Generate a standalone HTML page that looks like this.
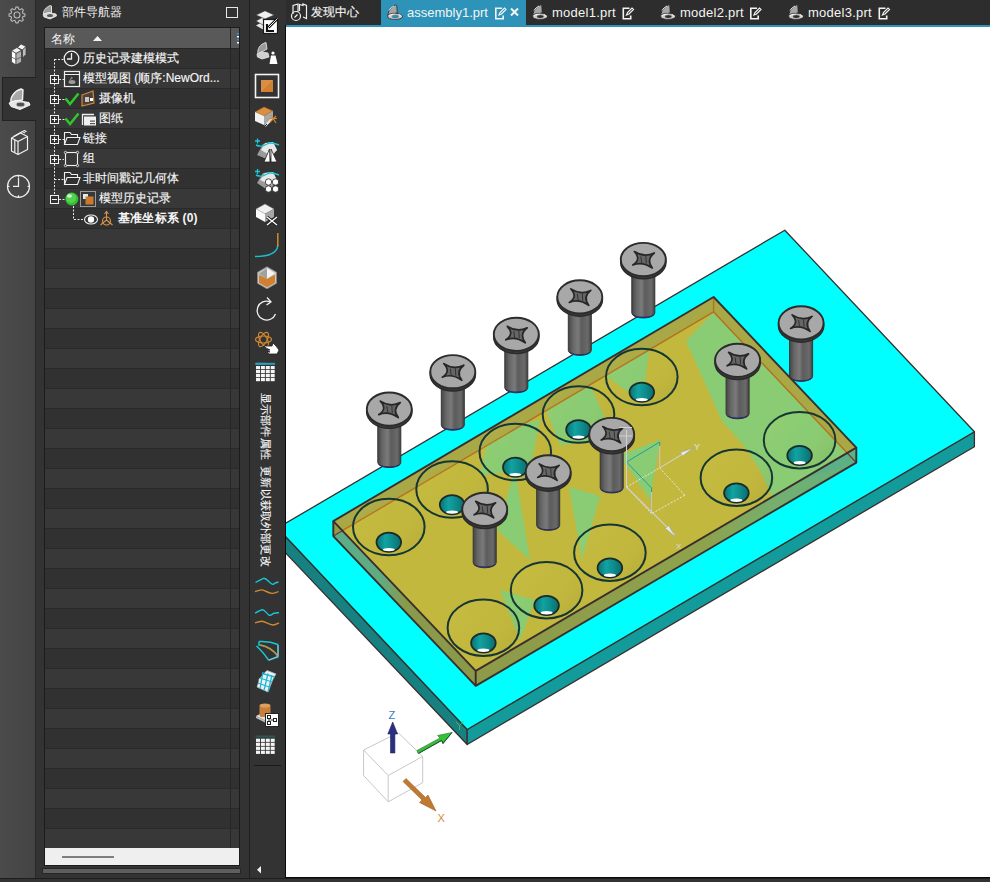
<!DOCTYPE html>
<html><head><meta charset="utf-8">
<style>
*{margin:0;padding:0;box-sizing:border-box}
html,body{width:990px;height:882px;overflow:hidden;background:#333333;font-family:"Liberation Sans",sans-serif;color:#fff}
.a{position:absolute}
#leftbar{left:0;top:0;width:36px;height:878px;background:linear-gradient(90deg,#4b4b4b,#444444);border-right:1px solid #2a2a2a}
#seltab{left:2px;top:77px;width:34px;height:44px;background:#333333;border:1px solid #222;border-right:none}
#nav{left:36px;top:0;width:213px;height:878px;background:#333333}
#title{left:62px;top:4px;font-size:12px;line-height:16px;color:#f0f0f0}
#maxbox{left:226px;top:7px;width:12px;height:11px;border:1.5px solid #e8e8e8}
#table{left:44px;top:27px;width:196px;height:839px;border:1px solid #1c1c1c;background:#313131;overflow:hidden}
#hdr{left:0;top:0;width:194px;height:21px;background:#595959;border-bottom:1px solid #262626}
.row{position:absolute;left:0;width:194px;height:20px;border-bottom:1px solid #2a2a2a}
.r0{background:#313131}.r1{background:#383838}
#colsep{left:185px;top:0;width:1px;height:820px;background:#262626}
#hscroll{left:0;top:820px;width:194px;height:17px;background:#efefef}
#hbar{left:42px;top:868px;width:199px;height:6px;background:#5e5e5e;border:1px solid #262626}
#vsep{left:249px;top:0;width:1px;height:878px;background:#1f1f1f}
#toolbar{left:250px;top:0;width:36px;height:878px;background:#333333}
#vleft{left:285px;top:25px;width:1px;height:853px;background:#0a0a0a}
#tabbar{left:286px;top:0;width:704px;height:25px;background:#2d2d2d}
#tabline{left:286px;top:25px;width:704px;height:2px;background:#2e93b8}
#acttab{left:381px;top:0;width:145px;height:25px;background:#2e93b8}
#view{left:286px;top:27px;width:704px;height:850px;background:#fff;overflow:hidden}
#bottom{left:0;top:878px;width:990px;height:4px;background:#333333;border-top:1px solid #1e1e1e}
#vbot{left:285px;top:877px;width:705px;height:1px;background:#080808}
.t12{font-size:12px;line-height:16px;white-space:nowrap;color:#f6f6f6;-webkit-text-stroke:0.15px #f6f6f6}
.t13{font-size:13px;line-height:16px;white-space:nowrap;color:#f2f2f2}
</style></head><body>
<div class="a" id="leftbar"></div>
<div class="a" id="seltab"></div>
<div class="a" id="nav"></div>
<div class="a" id="title">部件导航器</div>
<div class="a" id="maxbox"></div>
<div class="a" id="table">
  <div class="a" id="hdr"></div>
  <div class="row r0" style="top:21px"></div>
  <div class="row r1" style="top:41px"></div>
  <div class="row r0" style="top:61px"></div>
  <div class="row r1" style="top:81px"></div>
  <div class="row r0" style="top:101px"></div>
  <div class="row r1" style="top:121px"></div>
  <div class="row r0" style="top:141px"></div>
  <div class="row r1" style="top:161px"></div>
  <div class="row r0" style="top:181px"></div>
  <div class="row r1" style="top:201px"></div>
  <div class="row r0" style="top:221px"></div>
  <div class="row r1" style="top:241px"></div>
  <div class="row r0" style="top:261px"></div>
  <div class="row r1" style="top:281px"></div>
  <div class="row r0" style="top:301px"></div>
  <div class="row r1" style="top:321px"></div>
  <div class="row r0" style="top:341px"></div>
  <div class="row r1" style="top:361px"></div>
  <div class="row r0" style="top:381px"></div>
  <div class="row r1" style="top:401px"></div>
  <div class="row r0" style="top:421px"></div>
  <div class="row r1" style="top:441px"></div>
  <div class="row r0" style="top:461px"></div>
  <div class="row r1" style="top:481px"></div>
  <div class="row r0" style="top:501px"></div>
  <div class="row r1" style="top:521px"></div>
  <div class="row r0" style="top:541px"></div>
  <div class="row r1" style="top:561px"></div>
  <div class="row r0" style="top:581px"></div>
  <div class="row r1" style="top:601px"></div>
  <div class="row r0" style="top:621px"></div>
  <div class="row r1" style="top:641px"></div>
  <div class="row r0" style="top:661px"></div>
  <div class="row r1" style="top:681px"></div>
  <div class="row r0" style="top:701px"></div>
  <div class="row r1" style="top:721px"></div>
  <div class="row r0" style="top:741px"></div>
  <div class="row r1" style="top:761px"></div>
  <div class="row r0" style="top:781px"></div>
  <div class="row r1" style="top:801px"></div>
  
  <div class="a" id="colsep"></div>
  <div class="a" id="hscroll"><div class="a" style="left:17px;top:8px;width:52px;height:2px;background:#7e7e7e"></div></div>
</div>
<!--TREE-->
<div class="a t13" style="left:51px;top:31px;font-size:12px;line-height:16px;color:#f4f4f4">名称</div>
<svg class="a" style="left:92px;top:35px" width="11" height="7"><path d="M1 6 L5.5 1 L10 6 Z" fill="#f4f4f4"/></svg>
<svg class="a" style="left:236px;top:31px" width="4" height="14"><rect x="1" y="2" width="2" height="1.5" fill="#3b8fe0"/><rect x="1" y="5" width="2" height="1.5" fill="#fff"/><rect x="1" y="8" width="2" height="1.5" fill="#3b8fe0"/><rect x="1" y="11" width="2" height="1.5" fill="#fff"/></svg>
<svg class="a" style="left:44px;top:48px" width="196" height="180">
 <g stroke="#e6e6e6" stroke-width="1" fill="none" stroke-dasharray="2 1.5">
  <path d="M10.5 11 V151"/>
  <path d="M10.5 11.5 H20"/>
  <path d="M15 31.5 H20 M15 51.5 H21 M15 71.5 H21 M15 91.5 H20 M15 111.5 H20 M10.5 131.5 H20 M15 151.5 H21"/>
  <path d="M29.5 158 V171.5 H40"/>
 </g>
 <g stroke="#f0f0f0" stroke-width="1" fill="#333">
  <rect x="6.5" y="27.5" width="8" height="8"/><rect x="6.5" y="47.5" width="8" height="8"/><rect x="6.5" y="67.5" width="8" height="8"/><rect x="6.5" y="87.5" width="8" height="8"/><rect x="6.5" y="107.5" width="8" height="8"/><rect x="6.5" y="147.5" width="8" height="8"/>
 </g>
 <g stroke="#f4f4f4" stroke-width="1">
  <path d="M8 31.5 H13 M10.5 29 V34 M8 51.5 H13 M10.5 49 V54 M8 71.5 H13 M10.5 69 V74 M8 91.5 H13 M10.5 89 V94 M8 111.5 H13 M10.5 109 V114 M8 151.5 H13"/>
 </g>
 <!-- clock row1 -->
 <circle cx="27.5" cy="10.5" r="7.3" stroke="#f0f0f0" stroke-width="1.3" fill="none"/>
 <path d="M27.5 5 V11 H23" stroke="#f0f0f0" stroke-width="1.3" fill="none"/>
 <!-- model view row2 -->
 <rect x="20.5" y="23.5" width="15" height="15" stroke="#f0f0f0" stroke-width="1.2" fill="#333"/>
 <path d="M20.5 26.5 H35.5" stroke="#f0f0f0" stroke-width="1"/>
 <ellipse cx="28" cy="34" rx="3.5" ry="2" fill="#9a9a9a"/><path d="M25 33 L27.5 28.5 L29 30 Z" fill="#8a8a8a"/>
 <!-- checks -->
 <path d="M21.5 50.5 L26 56 L34.5 45.5" stroke="#2ec82e" stroke-width="2.5" fill="none"/>
 <path d="M21.5 70.5 L26 76 L34.5 65.5" stroke="#2ec82e" stroke-width="2.5" fill="none"/>
 <!-- camera -->
 <path d="M38 47 L49 43 L50 55 L38 58 Z" stroke="#d08a38" stroke-width="1.2" fill="#4a4040"/>
 <rect x="41" y="49" width="4" height="5" fill="#c8c8c8"/><rect x="46" y="50" width="3" height="3" fill="#fff"/>
 <!-- drawing -->
 <path d="M38.5 77 V66.5 H50" stroke="#f0f0f0" stroke-width="1.3" fill="none"/>
 <rect x="40" y="68.5" width="12" height="9" fill="#f0f0f0"/><rect x="46" y="72.5" width="5" height="1.2" fill="#555"/><rect x="46" y="75" width="5" height="1.2" fill="#555"/>
 <!-- folder row5 -->
 <path d="M20.5 96.5 V84.5 H26 L27.5 86.5 H33.5 V89.5" stroke="#f0f0f0" stroke-width="1.1" fill="none"/>
 <path d="M20.5 96.5 L23 89.5 H36 L33.5 96.5 Z" stroke="#f0f0f0" stroke-width="1.1" fill="none"/>
 <!-- group row6 -->
 <rect x="21.5" y="104.5" width="12" height="13" stroke="#f0f0f0" stroke-width="1.1" fill="none"/>
 <g fill="#333" stroke="#f0f0f0" stroke-width="0.8"><circle cx="21.5" cy="104.5" r="1.2"/><circle cx="33.5" cy="104.5" r="1.2"/><circle cx="21.5" cy="117.5" r="1.2"/><circle cx="33.5" cy="117.5" r="1.2"/></g>
 <!-- folder row7 -->
 <path d="M20.5 136.5 V124.5 H26 L27.5 126.5 H33.5 V129.5" stroke="#f0f0f0" stroke-width="1.1" fill="none"/>
 <path d="M20.5 136.5 L23 129.5 H36 L33.5 136.5 Z" stroke="#f0f0f0" stroke-width="1.1" fill="none"/>
 <!-- green ball row8 -->
 <circle cx="27.8" cy="151" r="6.5" fill="#30c030"/><circle cx="27" cy="150" r="5" fill="#52d452"/><ellipse cx="25.5" cy="148" rx="2.5" ry="1.8" fill="#d8f0d8"/>
 <rect x="36.5" y="143.5" width="15" height="15" stroke="#9a9a9a" stroke-width="1" fill="none"/>
 <rect x="39" y="146" width="5" height="5" fill="#e8e8e8"/><rect x="41.5" y="148.5" width="8" height="8" fill="#c87a30"/>
 <!-- eye row9 -->
 <ellipse cx="47" cy="171.5" rx="6.5" ry="4.5" stroke="#f0f0f0" stroke-width="1.1" fill="none"/>
 <circle cx="47" cy="171.5" r="3.2" fill="#fff"/>
 <!-- csys row9 -->
 <g stroke="#d8944a" stroke-width="1.1" fill="none"><path d="M62.5 164 V172 L56.5 177 M62.5 172 L68.5 177"/><circle cx="62.5" cy="173" r="4"/><path d="M60.5 166 L62.5 163.5 L64.5 166"/></g>
</svg>
<div class="a t12" style="left:83px;top:50px">历史记录建模模式</div>
<div class="a t12" style="left:83px;top:70px">模型视图 (顺序:NewOrd...</div>
<div class="a t12" style="left:99px;top:90px">摄像机</div>
<div class="a t12" style="left:99px;top:110px">图纸</div>
<div class="a t12" style="left:83px;top:130px">链接</div>
<div class="a t12" style="left:83px;top:150px">组</div>
<div class="a t12" style="left:83px;top:170px">非时间戳记几何体</div>
<div class="a t12" style="left:99px;top:190px">模型历史记录</div>
<div class="a t12" style="left:118px;top:210px;font-weight:bold;-webkit-text-stroke:0;letter-spacing:0.2px">基准坐标系 (0)</div>

<div class="a" id="hbar"></div>
<div class="a" id="vsep"></div>
<div class="a" id="toolbar"></div>
<div class="a" id="vleft"></div>






<!--ICONS-->
<svg class="a" style="left:0;top:0" width="286" height="882">
<path d="M15.87 7.08 L18.13 7.08 L18.54 8.99 L20.16 9.66 L21.80 8.60 L23.40 10.20 L22.34 11.84 L23.01 13.46 L24.92 13.87 L24.92 16.13 L23.01 16.54 L22.34 18.16 L23.40 19.80 L21.80 21.40 L20.16 20.34 L18.54 21.01 L18.13 22.92 L15.87 22.92 L15.46 21.01 L13.84 20.34 L12.20 21.40 L10.60 19.80 L11.66 18.16 L10.99 16.54 L9.08 16.13 L9.08 13.87 L10.99 13.46 L11.66 11.84 L10.60 10.20 L12.20 8.60 L13.84 9.66 L15.46 8.99 Z" fill="none" stroke="#b8b8b8" stroke-width="1.1" stroke-linejoin="round"/>
<circle cx="17" cy="15" r="3" fill="none" stroke="#b8b8b8" stroke-width="1.1"/>
<g stroke="#3a3a3a" stroke-width="0.7" stroke-linejoin="round">
 <path d="M17.5 47.5 L21 44 L26 46.5 L22.5 50 Z" fill="#f2f2f2"/>
 <path d="M22.5 50 L26 46.5 V54.5 L22.5 58 Z" fill="#bdbdbd"/>
 <path d="M11.5 50.5 L17 47.5 L21.5 50.5 L16 53.5 Z" fill="#f0f0f0"/>
 <path d="M11.5 50.5 L16 53.5 V65 L11.5 62 Z" fill="#ffffff"/>
 <path d="M16 53.5 L21.5 50.5 V62 L16 65 Z" fill="#b0b0b0"/>
 <path d="M11.5 57 L16 59.5 L21.5 57" fill="none" stroke="#555" stroke-width="0.8"/>
</g>
<g transform="translate(8 88)">
 <path d="M3 14 C2 10 6 3 13 1 L15 2 L14.5 12 Z" fill="#a8a8a8" stroke="#f2f2f2" stroke-width="1.4" stroke-linejoin="round"/>
 <path d="M1 15 L8 12.5 L21 14.5 L22 17 L12 21.5 L3 18.5 Z" fill="#e6e6e6" stroke="#f5f5f5" stroke-width="1"/>
 <ellipse cx="12.5" cy="16.5" rx="4.2" ry="2.3" fill="#505050" stroke="#cfcfcf" stroke-width="0.8"/>
</g>
<g stroke="#f0f0f0" stroke-width="1.2" fill="none" stroke-linejoin="round">
 <path d="M11.5 138 L20.5 133 L27.5 136.5 V149.5 L18 154.5 L11.5 151 Z"/>
 <path d="M11.5 138 L18 141.5 V154.5 M18 141.5 L27.5 136.5"/>
 <path d="M14.8 139.8 V152.8"/>
 <path d="M13.5 136.5 L22.5 131.5 L25 133 M15.8 135.2 L24.5 130.5 L26.5 131.8"/>
</g>
<g stroke="#f0f0f0" stroke-width="1.2" fill="none">
 <circle cx="18.5" cy="186.4" r="11"/>
 <path d="M18.5 178 V186.4 H13 M18.5 175.5 V177.5 M18.5 195.3 V197.3 M7.5 186.4 H9.5 M27.5 186.4 H29.5"/>
</g>
<g transform="translate(42 5) scale(1)">
 <path d="M1.5 9 C1 6 4 2 8.5 0.5 L9.5 1 L9.5 8 Z" fill="#9c9c9c" stroke="#e0e0e0" stroke-width="1"/>
 <path d="M1 9.5 L6 7.5 L14 9 L14.5 11 L8 14 L2 12 Z" fill="#d8d8d8" stroke="#f0f0f0" stroke-width="0.8"/>
 <ellipse cx="8" cy="10.5" rx="3" ry="1.6" fill="#5a5a5a"/>
</g>
<g>
 <path d="M256 25.5 L263 21.5 L270 25.5 L263 29.5 Z" fill="#e6e6e6"/>
 <path d="M256 21 L263 17 L270 21 L263 25 Z" fill="#eeeeee" stroke="#333" stroke-width="0.6"/>
 <path d="M256 15 L265 10.8 L274.2 15 L265 19 Z" fill="#f0f0f0" stroke="#333" stroke-width="0.6"/>
 <rect x="263.5" y="19.5" width="14" height="14" fill="#fff" stroke="#1a1a1a" stroke-width="1.2"/>
 <path d="M277.5 18.5 L268.5 27.5" stroke="#111" stroke-width="2.6"/>
 <path d="M277.5 18.5 L268.5 27.5" stroke="#fff" stroke-width="0.9"/>
 <path d="M267 24 V31 H274" stroke="#111" stroke-width="2.2" fill="none"/>
</g>
<g transform="translate(256 42)">
 <path d="M2 12 C1 7 4 2 10 0.5 L11 7 Z" fill="#9a9a9a" stroke="#d8d8d8" stroke-width="1"/>
 <path d="M1 12 L6 10 L12 11 L13 15 L6 17 L1.5 15 Z" fill="#cfcfcf" stroke="#e8e8e8" stroke-width="0.8"/>
 <circle cx="17" cy="11" r="1.6" fill="#fff"/>
 <path d="M13.5 22 L15 13.5 H19.5 L21.5 22 Z" fill="#fff"/>
</g>
<rect x="255.5" y="74.5" width="23" height="23" fill="none" stroke="#f4f4f4" stroke-width="1.6"/>
<rect x="261" y="80" width="12" height="12" fill="#d08030"/><path d="M261 80 H273 L261 92 Z" fill="#e09850" opacity="0.6"/>
<g transform="translate(255 104)">
 <path d="M0 8 L9 3 L18 7 L9 12 Z" fill="#d9903e" stroke="#a86020" stroke-width="0.6"/>
 <path d="M0 8 L9 12 V21 L0 17 Z" fill="#f2f2f2"/>
 <path d="M9 12 L18 7 V15 L9 21 Z" fill="#a8a8a8"/>
 <path d="M10 22 L18 14" stroke="#f0f0f0" stroke-width="2"/><path d="M9.5 22.5 L12 20" stroke="#222" stroke-width="1"/>
 <path d="M16 11 L21 19 M21 12 L15 18 M14 14.5 H22" stroke="#d08a30" stroke-width="1.2"/>
</g>
<g transform="translate(255 138)">
 <path d="M2 17 L8 6 L18 4 L22 12 L14 22 Z" fill="#9a9a9a"/>
 <path d="M6 12 L10 5 L18 4 L22 12 L16 18 Z" fill="#e8e8e8"/>
 <path d="M9 24 L14.5 11 L15 24 Z M16 24 L16 11 L22 24 Z" fill="#fff" stroke="#222" stroke-width="0.8"/>
 <path d="M1 7 C5 9 9 8 12 6 C15 4 19 5 24 7" stroke="#18c8d8" stroke-width="1.4" fill="none"/>
 <path d="M2.5 0.5 V5.5 M0 3 H5" stroke="#18c8d8" stroke-width="1.3"/>
</g>
<g transform="translate(255 169)">
 <path d="M2 14 L8 4 L18 3 L22 12 L14 22 Z" fill="#9a9a9a"/>
 <path d="M5 11 L10 4 L18 3 L22 11 L16 16 Z" fill="#e8e8e8"/>
 <path d="M1 6 C5 8 9 7 12 5 C15 3 19 4 24 6" stroke="#18c8d8" stroke-width="1.4" fill="none"/>
 <path d="M2.5 0 V5 M0 2.5 H5" stroke="#18c8d8" stroke-width="1.3"/>
 <g fill="#fff" stroke="#222" stroke-width="0.8"><circle cx="13.5" cy="13" r="3.2"/><circle cx="20.5" cy="13" r="3.2"/><circle cx="13.5" cy="20" r="3.2"/><circle cx="20.5" cy="20" r="3.2"/></g>
</g>
<g transform="translate(256 203)">
 <path d="M0 6 L9 1 L18 6 L9 11 Z" fill="#f0f0f0" stroke="#777" stroke-width="0.5"/>
 <path d="M0 6 L9 11 V19 L0 14 Z" fill="#fafafa"/>
 <path d="M9 11 L18 6 V14 L9 19 Z" fill="#a6a6a6"/>
 <path d="M11 14 L21 22 M21 14 L11 22" stroke="#222" stroke-width="3"/>
 <path d="M11 14 L21 22 M21 14 L11 22" stroke="#fff" stroke-width="1.3"/>
</g>
<path d="M255 256.5 C268 256.5 277.5 253 277.8 245" stroke="#18c0d0" stroke-width="1.5" fill="none"/>
<path d="M277.8 246.5 V233" stroke="#d08a30" stroke-width="1.5" fill="none"/>
<g transform="translate(267 277.8)">
 <path d="M0 -11 L9.5 -5.5 V5.5 L0 11 L-9.5 5.5 V-5.5 Z" fill="#c8c8c8" stroke="#8a8a8a" stroke-width="0.8"/>
 <path d="M-8 -3 L0 1 L8 -3 V5 L0 9.5 L-8 5 Z" fill="#d08030"/>
 <path d="M0 -9.5 L8 -4.5 L0 1 Z" fill="#f4f4f4"/>
 <path d="M-8 -4 L0 -9.5 L0 1 Z" fill="#a0a0a0"/>
</g>
<path d="M275.5 314 A9.5 9.5 0 1 1 270 301.7" stroke="#f0f0f0" stroke-width="1.3" fill="none"/>
<path d="M267 297.5 L271 301.8 L266.5 305" stroke="#f0f0f0" stroke-width="1.3" fill="none"/>
<g stroke="#d08a30" stroke-width="1.2" fill="none">
 <ellipse cx="263.5" cy="339.5" rx="8" ry="3.5"/>
 <ellipse cx="263.5" cy="339.5" rx="8" ry="3.5" transform="rotate(60 263.5 339.5)"/>
 <ellipse cx="263.5" cy="339.5" rx="8" ry="3.5" transform="rotate(-60 263.5 339.5)"/>
</g>
<path d="M264 346 H272 L273 343 L276 346 L279 350 L277 354 H269 L267 352 H270 L267 350 H270 L266 348 Z" fill="#fff" stroke="#222" stroke-width="0.8"/>
<rect x="255.5" y="362.8" width="10" height="2" fill="#3a8ee0"/>
<rect x="255.5" y="362.8" width="19.5" height="2" fill="#2aa0b8"/>
<rect x="256.0" y="366.0" width="4" height="3.2" fill="#f4f4f4"/>
<rect x="260.9" y="366.0" width="4" height="3.2" fill="#f4f4f4"/>
<rect x="265.8" y="366.0" width="4" height="3.2" fill="#f4f4f4"/>
<rect x="270.7" y="366.0" width="4" height="3.2" fill="#f4f4f4"/>
<rect x="256.0" y="370.0" width="4" height="3.2" fill="#f4f4f4"/>
<rect x="260.9" y="370.0" width="4" height="3.2" fill="#f4f4f4"/>
<rect x="265.8" y="370.0" width="4" height="3.2" fill="#f4f4f4"/>
<rect x="270.7" y="370.0" width="4" height="3.2" fill="#f4f4f4"/>
<rect x="256.0" y="374.0" width="4" height="3.2" fill="#f4f4f4"/>
<rect x="260.9" y="374.0" width="4" height="3.2" fill="#f4f4f4"/>
<rect x="265.8" y="374.0" width="4" height="3.2" fill="#f4f4f4"/>
<rect x="270.7" y="374.0" width="4" height="3.2" fill="#f4f4f4"/>
<rect x="256.0" y="378.0" width="4" height="3.2" fill="#f4f4f4"/>
<rect x="260.9" y="378.0" width="4" height="3.2" fill="#f4f4f4"/>
<rect x="265.8" y="378.0" width="4" height="3.2" fill="#f4f4f4"/>
<rect x="270.7" y="378.0" width="4" height="3.2" fill="#f4f4f4"/>
<path d="M255.5 582.5 C258 581 261 579.5 263.5 578.3 C266 577.5 268.5 582 271 583.5 C272.5 584.5 273.5 584.5 274 584" stroke="#18c8d8" stroke-width="1.4" fill="none"/>
<path d="M273.5 584 C275 583 277 582.3 278.5 582" stroke="#18c8d8" stroke-width="1.4" fill="none"/>
<path d="M255 591.7 C258 590.5 260 589.7 262 589.9 C265 590.3 269 593.5 272.5 593.4 C275 593.3 277 592.3 278.5 591.5" stroke="#d08a30" stroke-width="1.4" fill="none"/>
<path d="M255 613.2 C258 611.5 260.5 610 262.5 609.8 C264.5 609.6 266.5 613.5 269.3 615.3 C271 616 272 614 274 613.2 C276 612.8 277.5 612.8 279 612.7" stroke="#18c8d8" stroke-width="1.4" fill="none"/>
<path d="M255 622.9 C258 621.8 260 621.2 262 621.3 C265 621.6 269 624.6 273 625 C275.5 625 277.5 623.7 279 622.9" stroke="#d08a30" stroke-width="1.4" fill="none"/>
<path d="M259 641.5 C266 641 272 642 278 644.5 M256.5 646 C261 650 265 655 268.5 660 M259 641.5 V646 M260 645 C267 646 274 651 278 656 M278 644.5 V657 L269 660" stroke="#18c8d8" stroke-width="1.5" fill="none"/>
<path d="M260 645 C267 646 274 651 277.5 655.5" stroke="#d08a30" stroke-width="1.4" fill="none"/>
<path d="M278 645 V656 L268.5 660.5" stroke="#c0c0c0" stroke-width="0.8" fill="none"/>
<g transform="translate(256 670)">
 <path d="M3 9 C6 7 8 3 11 0.5 L20 4 C17 8 16 12 12 22 L1 17 C2 14 3 12 3 9 Z" fill="#f0f0f0" stroke="#bdbdbd" stroke-width="0.7"/>
 <path d="M2 13 L13 17 M4 8 L16 12 M8 4 L19 7 M7 2 L4 19 M12 3.5 L8 20.5 M16 5 L12 22" stroke="#1ab8d8" stroke-width="1.3"/>
</g>
<g transform="translate(256 703)">
 <path d="M0 13 L8 9 L18 13 L10 18 Z" fill="#e0e0e0"/><path d="M0 13 L10 18 V20 L0 15 Z" fill="#bdbdbd"/>
 <rect x="3.5" y="2" width="11" height="12" rx="2" fill="#c88038"/><ellipse cx="9" cy="2.5" rx="5.5" ry="2" fill="#dca060"/>
 <rect x="9.5" y="10.5" width="13" height="13" fill="#fff" stroke="#222" stroke-width="1"/>
 <g fill="none" stroke="#222" stroke-width="1"><rect x="11.5" y="12.5" width="3" height="3"/><rect x="11.5" y="18.5" width="3" height="3"/><rect x="17.5" y="15.5" width="3" height="3"/><path d="M13 15.5 V18.5 M14.5 17 H17.5"/></g>
</g>
<rect x="255.5" y="735.5" width="19.5" height="2" fill="#2a5858"/>
<rect x="256.0" y="738.7" width="4" height="3.2" fill="#f4f4f4"/>
<rect x="260.9" y="738.7" width="4" height="3.2" fill="#f4f4f4"/>
<rect x="265.8" y="738.7" width="4" height="3.2" fill="#f4f4f4"/>
<rect x="270.7" y="738.7" width="4" height="3.2" fill="#f4f4f4"/>
<rect x="256.0" y="742.7" width="4" height="3.2" fill="#f4f4f4"/>
<rect x="260.9" y="742.7" width="4" height="3.2" fill="#f4f4f4"/>
<rect x="265.8" y="742.7" width="4" height="3.2" fill="#f4f4f4"/>
<rect x="270.7" y="742.7" width="4" height="3.2" fill="#f4f4f4"/>
<rect x="256.0" y="746.7" width="4" height="3.2" fill="#f4f4f4"/>
<rect x="260.9" y="746.7" width="4" height="3.2" fill="#f4f4f4"/>
<rect x="265.8" y="746.7" width="4" height="3.2" fill="#f4f4f4"/>
<rect x="270.7" y="746.7" width="4" height="3.2" fill="#f4f4f4"/>
<rect x="256.0" y="750.7" width="4" height="3.2" fill="#f4f4f4"/>
<rect x="260.9" y="750.7" width="4" height="3.2" fill="#f4f4f4"/>
<rect x="265.8" y="750.7" width="4" height="3.2" fill="#f4f4f4"/>
<rect x="270.7" y="750.7" width="4" height="3.2" fill="#f4f4f4"/>
<rect x="254" y="765" width="27" height="1" fill="#1a1a1a"/>
<path d="M261 866 V873.5 L257 869.75 Z" fill="#f0f0f0"/>
</svg>
<div class="a" style="left:272px;top:393px;transform-origin:0 0;transform:rotate(90deg);font-size:11px;line-height:12px;color:#f8f8f8;white-space:nowrap;letter-spacing:0.15px;-webkit-text-stroke:0.15px #f8f8f8">显示部件属性&nbsp;&nbsp;更新以获取外部更改</div>
<!--/ICONS-->
<div class="a" id="tabbar"></div>
<div class="a" id="acttab"></div>
<div class="a" id="tabline"></div>
<!--TABS-->
<svg class="a" style="left:286px;top:0" width="704" height="25" viewBox="286 0 704 25">
<g fill="none" stroke="#f0f0f0" stroke-width="1.2">
 <path d="M293 14 V5.5 L298 4 V12"/><path d="M299.5 11 V4.5 L303 5.5 V4 L306.5 5.5 V18.5 L303 17"/>
 <circle cx="296" cy="16" r="4.5"/><path d="M294.5 17.5 L297.5 14.5"/>
</g>
<g transform="translate(387 4.5)">
 <path d="M1 10.5 C1.2 6.5 4 2.5 8.8 0.3 L9.8 1 L10.2 8.5 Z" fill="#a6a6a6" stroke="#2a2a2a" stroke-width="0.8" stroke-linejoin="round"/>
 <path d="M2 6 C3 4 5 2.5 7 1.5" stroke="#f0f0f0" stroke-width="0.9" fill="none"/>
 <path d="M0.5 10.8 C3 8.8 8 8.3 11.5 9.2 L15.8 11.6 L14.5 13.6 C10.5 15.6 4.5 15.3 1 13.2 Z" fill="#cfcfcf" stroke="#2a2a2a" stroke-width="0.8" stroke-linejoin="round"/>
 <path d="M2 11 C4 10 6 9.6 8 9.7 M12 10 L14.5 11.5" stroke="#fafafa" stroke-width="1" fill="none"/>
 <ellipse cx="8.3" cy="12" rx="3.2" ry="1.5" fill="#2e93b8" stroke="#6a6a6a" stroke-width="0.6"/>
</g>
<g transform="translate(495 7.5)" fill="none" stroke="#f4f4f4" stroke-width="1.6">
 <path d="M7 0.8 H0.8 V11.2 H8.2 V8"/><path d="M4 7.5 L5 5 L9.5 0.5 L11 2 L6.5 6.5 Z" stroke-width="1.2"/>
</g>
<path d="M511 8.5 L518 15.5 M518 8.5 L511 15.5" stroke="#f4f4f4" stroke-width="2"/>
<g transform="translate(532 4.5)">
 <path d="M1 10.5 C1.2 6.5 4 2.5 8.8 0.3 L9.8 1 L10.2 8.5 Z" fill="#a6a6a6" stroke="#2a2a2a" stroke-width="0.8" stroke-linejoin="round"/>
 <path d="M2 6 C3 4 5 2.5 7 1.5" stroke="#f0f0f0" stroke-width="0.9" fill="none"/>
 <path d="M0.5 10.8 C3 8.8 8 8.3 11.5 9.2 L15.8 11.6 L14.5 13.6 C10.5 15.6 4.5 15.3 1 13.2 Z" fill="#cfcfcf" stroke="#2a2a2a" stroke-width="0.8" stroke-linejoin="round"/>
 <path d="M2 11 C4 10 6 9.6 8 9.7 M12 10 L14.5 11.5" stroke="#fafafa" stroke-width="1" fill="none"/>
 <ellipse cx="8.3" cy="12" rx="3.2" ry="1.5" fill="#2d2d2d" stroke="#6a6a6a" stroke-width="0.6"/>
</g>
<g transform="translate(622.5 7.5)" fill="none" stroke="#f4f4f4" stroke-width="1.6">
 <path d="M7 0.8 H0.8 V11.2 H8.2 V8"/><path d="M4 7.5 L5 5 L9.5 0.5 L11 2 L6.5 6.5 Z" stroke-width="1.2"/>
</g>
<g transform="translate(660 4.5)">
 <path d="M1 10.5 C1.2 6.5 4 2.5 8.8 0.3 L9.8 1 L10.2 8.5 Z" fill="#a6a6a6" stroke="#2a2a2a" stroke-width="0.8" stroke-linejoin="round"/>
 <path d="M2 6 C3 4 5 2.5 7 1.5" stroke="#f0f0f0" stroke-width="0.9" fill="none"/>
 <path d="M0.5 10.8 C3 8.8 8 8.3 11.5 9.2 L15.8 11.6 L14.5 13.6 C10.5 15.6 4.5 15.3 1 13.2 Z" fill="#cfcfcf" stroke="#2a2a2a" stroke-width="0.8" stroke-linejoin="round"/>
 <path d="M2 11 C4 10 6 9.6 8 9.7 M12 10 L14.5 11.5" stroke="#fafafa" stroke-width="1" fill="none"/>
 <ellipse cx="8.3" cy="12" rx="3.2" ry="1.5" fill="#2d2d2d" stroke="#6a6a6a" stroke-width="0.6"/>
</g>
<g transform="translate(750 7.5)" fill="none" stroke="#f4f4f4" stroke-width="1.6">
 <path d="M7 0.8 H0.8 V11.2 H8.2 V8"/><path d="M4 7.5 L5 5 L9.5 0.5 L11 2 L6.5 6.5 Z" stroke-width="1.2"/>
</g>
<g transform="translate(788 4.5)">
 <path d="M1 10.5 C1.2 6.5 4 2.5 8.8 0.3 L9.8 1 L10.2 8.5 Z" fill="#a6a6a6" stroke="#2a2a2a" stroke-width="0.8" stroke-linejoin="round"/>
 <path d="M2 6 C3 4 5 2.5 7 1.5" stroke="#f0f0f0" stroke-width="0.9" fill="none"/>
 <path d="M0.5 10.8 C3 8.8 8 8.3 11.5 9.2 L15.8 11.6 L14.5 13.6 C10.5 15.6 4.5 15.3 1 13.2 Z" fill="#cfcfcf" stroke="#2a2a2a" stroke-width="0.8" stroke-linejoin="round"/>
 <path d="M2 11 C4 10 6 9.6 8 9.7 M12 10 L14.5 11.5" stroke="#fafafa" stroke-width="1" fill="none"/>
 <ellipse cx="8.3" cy="12" rx="3.2" ry="1.5" fill="#2d2d2d" stroke="#6a6a6a" stroke-width="0.6"/>
</g>
<g transform="translate(878.5 7.5)" fill="none" stroke="#f4f4f4" stroke-width="1.6">
 <path d="M7 0.8 H0.8 V11.2 H8.2 V8"/><path d="M4 7.5 L5 5 L9.5 0.5 L11 2 L6.5 6.5 Z" stroke-width="1.2"/>
</g>
</svg>
<div class="a t12" style="left:311px;top:4px;font-size:12px;color:#f2f2f2">发现中心</div>
<div class="a t13" id="tab1" style="left:407px;top:5px;font-size:13px;color:#f4f4f4">assembly1.prt</div>
<div class="a t13" id="tab2" style="left:552px;top:5px;font-size:13px;color:#f4f4f4;letter-spacing:0.25px">model1.prt</div>
<div class="a t13" id="tab3" style="left:680px;top:5px;font-size:13px;color:#f4f4f4;letter-spacing:0.25px">model2.prt</div>
<div class="a t13" id="tab4" style="left:808px;top:5px;font-size:13px;color:#f4f4f4;letter-spacing:0.25px">model3.prt</div>
<!--/TABS-->


<div class="a" id="view">
<!--VIEW-->
<svg class="a" style="left:0;top:0" width="704" height="850" viewBox="286 27 704 850">
<defs>
<linearGradient id="shaft" x1="0" x2="1" y1="0" y2="0"><stop offset="0" stop-color="#454545"/><stop offset="0.2" stop-color="#666"/><stop offset="0.42" stop-color="#7a7a7a"/><stop offset="0.58" stop-color="#5c5c5c"/><stop offset="0.85" stop-color="#6a6a6a"/><stop offset="1" stop-color="#404040"/></linearGradient>
<linearGradient id="hole" x1="0" x2="1" y1="0" y2="0"><stop offset="0" stop-color="#0a7272"/><stop offset="0.35" stop-color="#12a2a2"/><stop offset="0.65" stop-color="#0e8c8c"/><stop offset="1" stop-color="#0a6e6e"/></linearGradient>
<clipPath id="topclip"><polygon points="713.6,297.0 856.3,447.6 475.7,670.9 333.3,521.1"/></clipPath>
<linearGradient id="frside" gradientUnits="userSpaceOnUse" x1="476" y1="0" x2="856" y2="0"><stop offset="0" stop-color="#8e9a48"/><stop offset="0.6" stop-color="#8ea24c"/><stop offset="0.8" stop-color="#72b070"/><stop offset="1" stop-color="#62b080"/></linearGradient>
<linearGradient id="flside" gradientUnits="userSpaceOnUse" x1="333" y1="0" x2="476" y2="0"><stop offset="0" stop-color="#5aae8a"/><stop offset="0.35" stop-color="#62aa80"/><stop offset="0.5" stop-color="#8a9a4c"/><stop offset="1" stop-color="#8a9848"/></linearGradient>
<linearGradient id="cone" x1="0" x2="1" y1="0.2" y2="0.8"><stop offset="0" stop-color="#e8e060" stop-opacity="0.12"/><stop offset="0.5" stop-color="#c8c040" stop-opacity="0"/><stop offset="1" stop-color="#6a6a20" stop-opacity="0.14"/></linearGradient>
</defs>
<polygon points="277.6,528.0 467.2,729.5 467.2,744.5 277.6,544.5" fill="#178080" stroke="#3a2e2e" stroke-width="1.3" stroke-linejoin="round"/>
<polygon points="467.2,729.5 974.4,431.7 974.4,446.7 467.2,744.5" fill="#139a9a" stroke="#3a2e2e" stroke-width="1.3" stroke-linejoin="round"/>
<polygon points="784.8,230.2 974.4,431.7 467.2,729.5 277.6,528.0" fill="#00ffff" stroke="#3a2e2e" stroke-width="1.3" stroke-linejoin="round"/>
<path d="M377.8 419.1 V462.6 A11.5 5 0 0 0 400.8 462.6 V419.1 Z" fill="url(#shaft)" stroke="#353535" stroke-width="1"/>
<path d="M379.3 464.6 A11 4 0 0 0 399.3 464.6" fill="none" stroke="#2a2a70" stroke-width="1.2"/>
<ellipse cx="389.3" cy="411.6" rx="22.7" ry="16.8" fill="#3c3c3c" stroke="#2a2a2a" stroke-width="1.4"/>
<ellipse cx="389.3" cy="409.1" rx="22.5" ry="16.6" fill="#a8a8a8" stroke="#2c2c2c" stroke-width="1.9"/>
<path transform="translate(389.3 409.1)" d="M-9 -8 Q1 -1.5 11 -6.5 Q2.5 0 9 8.5 Q-1 1.5 -10.5 5.5 Q-1.5 0 -9 -8 Z" fill="#666" stroke="#262626" stroke-width="1.7" stroke-linejoin="round"/>
<path transform="translate(389.3 409.1)" d="M-2.5 -3 L-1.5 4 M2.5 -3.5 L3 4" stroke="#333" stroke-width="1"/>
<path d="M441.3 381.7 V425.2 A11.5 5 0 0 0 464.3 425.2 V381.7 Z" fill="url(#shaft)" stroke="#353535" stroke-width="1"/>
<path d="M442.8 427.2 A11 4 0 0 0 462.8 427.2" fill="none" stroke="#2a2a70" stroke-width="1.2"/>
<ellipse cx="452.8" cy="374.2" rx="22.7" ry="16.8" fill="#3c3c3c" stroke="#2a2a2a" stroke-width="1.4"/>
<ellipse cx="452.8" cy="371.7" rx="22.5" ry="16.6" fill="#a8a8a8" stroke="#2c2c2c" stroke-width="1.9"/>
<path transform="translate(452.8 371.7)" d="M-9 -8 Q1 -1.5 11 -6.5 Q2.5 0 9 8.5 Q-1 1.5 -10.5 5.5 Q-1.5 0 -9 -8 Z" fill="#666" stroke="#262626" stroke-width="1.7" stroke-linejoin="round"/>
<path transform="translate(452.8 371.7)" d="M-2.5 -3 L-1.5 4 M2.5 -3.5 L3 4" stroke="#333" stroke-width="1"/>
<path d="M504.8 344.3 V387.8 A11.5 5 0 0 0 527.8 387.8 V344.3 Z" fill="url(#shaft)" stroke="#353535" stroke-width="1"/>
<path d="M506.3 389.8 A11 4 0 0 0 526.3 389.8" fill="none" stroke="#2a2a70" stroke-width="1.2"/>
<ellipse cx="516.3" cy="336.8" rx="22.7" ry="16.8" fill="#3c3c3c" stroke="#2a2a2a" stroke-width="1.4"/>
<ellipse cx="516.3" cy="334.3" rx="22.5" ry="16.6" fill="#a8a8a8" stroke="#2c2c2c" stroke-width="1.9"/>
<path transform="translate(516.3 334.3)" d="M-9 -8 Q1 -1.5 11 -6.5 Q2.5 0 9 8.5 Q-1 1.5 -10.5 5.5 Q-1.5 0 -9 -8 Z" fill="#666" stroke="#262626" stroke-width="1.7" stroke-linejoin="round"/>
<path transform="translate(516.3 334.3)" d="M-2.5 -3 L-1.5 4 M2.5 -3.5 L3 4" stroke="#333" stroke-width="1"/>
<path d="M568.3 306.9 V350.4 A11.5 5 0 0 0 591.3 350.4 V306.9 Z" fill="url(#shaft)" stroke="#353535" stroke-width="1"/>
<path d="M569.8 352.4 A11 4 0 0 0 589.8 352.4" fill="none" stroke="#2a2a70" stroke-width="1.2"/>
<ellipse cx="579.8" cy="299.4" rx="22.7" ry="16.8" fill="#3c3c3c" stroke="#2a2a2a" stroke-width="1.4"/>
<ellipse cx="579.8" cy="296.9" rx="22.5" ry="16.6" fill="#a8a8a8" stroke="#2c2c2c" stroke-width="1.9"/>
<path transform="translate(579.8 296.9)" d="M-9 -8 Q1 -1.5 11 -6.5 Q2.5 0 9 8.5 Q-1 1.5 -10.5 5.5 Q-1.5 0 -9 -8 Z" fill="#666" stroke="#262626" stroke-width="1.7" stroke-linejoin="round"/>
<path transform="translate(579.8 296.9)" d="M-2.5 -3 L-1.5 4 M2.5 -3.5 L3 4" stroke="#333" stroke-width="1"/>
<path d="M631.8 269.5 V313.0 A11.5 5 0 0 0 654.8 313.0 V269.5 Z" fill="url(#shaft)" stroke="#353535" stroke-width="1"/>
<path d="M633.3 315.0 A11 4 0 0 0 653.3 315.0" fill="none" stroke="#2a2a70" stroke-width="1.2"/>
<ellipse cx="643.3" cy="262.0" rx="22.7" ry="16.8" fill="#3c3c3c" stroke="#2a2a2a" stroke-width="1.4"/>
<ellipse cx="643.3" cy="259.5" rx="22.5" ry="16.6" fill="#a8a8a8" stroke="#2c2c2c" stroke-width="1.9"/>
<path transform="translate(643.3 259.5)" d="M-9 -8 Q1 -1.5 11 -6.5 Q2.5 0 9 8.5 Q-1 1.5 -10.5 5.5 Q-1.5 0 -9 -8 Z" fill="#666" stroke="#262626" stroke-width="1.7" stroke-linejoin="round"/>
<path transform="translate(643.3 259.5)" d="M-2.5 -3 L-1.5 4 M2.5 -3.5 L3 4" stroke="#333" stroke-width="1"/>
<path d="M789.6 332.9 V376.4 A11.5 5 0 0 0 812.6 376.4 V332.9 Z" fill="url(#shaft)" stroke="#353535" stroke-width="1"/>
<path d="M791.1 378.4 A11 4 0 0 0 811.1 378.4" fill="none" stroke="#2a2a70" stroke-width="1.2"/>
<ellipse cx="801.1" cy="325.4" rx="22.7" ry="16.8" fill="#3c3c3c" stroke="#2a2a2a" stroke-width="1.4"/>
<ellipse cx="801.1" cy="322.9" rx="22.5" ry="16.6" fill="#a8a8a8" stroke="#2c2c2c" stroke-width="1.9"/>
<path transform="translate(801.1 322.9)" d="M-9 -8 Q1 -1.5 11 -6.5 Q2.5 0 9 8.5 Q-1 1.5 -10.5 5.5 Q-1.5 0 -9 -8 Z" fill="#666" stroke="#262626" stroke-width="1.7" stroke-linejoin="round"/>
<path transform="translate(801.1 322.9)" d="M-2.5 -3 L-1.5 4 M2.5 -3.5 L3 4" stroke="#333" stroke-width="1"/>
<polygon points="333.3,521.1 475.7,670.9 475.7,685.9 333.3,536.1" fill="url(#flside)"/>
<polygon points="333.3,521.1 333.3,536.1 342.4,530.7" fill="#8e9a4c"/>
<polygon points="475.7,670.9 856.3,447.6 856.3,462.6 475.7,685.9" fill="url(#frside)"/>
<polygon points="790.0,483.0 856.3,462.6 856.3,447.6 820.0,468.0" fill="#5ab088" opacity="0.8"/>
<polygon points="713.6,297.0 856.3,447.6 475.7,670.9 333.3,521.1" fill="#c3b83e"/>
<g clip-path="url(#topclip)">
<polygon points="686.0,341.0 713.6,312.0 847.2,453.0 856.3,447.6 772.0,497.0 760.0,470.0 745.0,447.0 722.0,421.0" fill="#7fcf7e" opacity="0.85"/>
<polygon points="542.0,400.0 590.0,385.0 615.0,440.0 560.0,445.0" fill="#7fcf7e" opacity="0.85"/>
<polygon points="490.0,430.0 540.0,420.0 530.0,470.0 480.0,475.0" fill="#7fcf7e" opacity="0.85"/>
<polygon points="497.0,530.0 515.0,470.0 530.0,560.0" fill="#7fcf7e" opacity="0.85"/>
<polygon points="569.0,487.0 600.0,496.0 582.0,560.0" fill="#7fcf7e" opacity="0.85"/>
<polygon points="600.0,372.0 650.0,345.0 642.0,402.0" fill="#7fcf7e" opacity="0.85"/>
<polygon points="500.0,590.0 535.0,600.0 520.0,640.0" fill="#7fcf7e" opacity="0.85"/>
<polygon points="620.0,455.0 660.0,440.0 650.0,500.0" fill="#7fcf7e" opacity="0.85"/>
<polygon points="333.3,521.1 713.6,297.0 856.3,447.6 847.2,453.0 713.6,312.0 342.4,530.7" fill="#a9a846"/>
</g>
<path d="M342.4 530.7 L713.6 312.0 L847.2 453.0 M713.6 297.0 V312.0" stroke="#b4701c" stroke-width="1.4" fill="none"/>
<path d="M333.3 536.1 L342.4 530.7 M856.3 462.6 L847.2 453.0" stroke="#6a3a2a" stroke-width="1.2" fill="none"/>
<ellipse cx="388.8" cy="527.0" rx="35.8" ry="28.2" fill="url(#cone)" stroke="#163636" stroke-width="2"/>
<ellipse cx="388.8" cy="542.3" rx="12.3" ry="9.6" fill="url(#hole)" stroke="#1c2a2a" stroke-width="1.8"/>
<ellipse cx="388.8" cy="549.6" rx="6" ry="1.7" fill="#fff"/>
<ellipse cx="452.1" cy="489.5" rx="35.8" ry="28.2" fill="url(#cone)" stroke="#163636" stroke-width="2"/>
<ellipse cx="452.1" cy="504.8" rx="12.3" ry="9.6" fill="url(#hole)" stroke="#1c2a2a" stroke-width="1.8"/>
<ellipse cx="452.1" cy="512.1" rx="6" ry="1.7" fill="#fff"/>
<ellipse cx="515.3" cy="452.0" rx="35.8" ry="28.2" fill="url(#cone)" stroke="#163636" stroke-width="2"/>
<ellipse cx="515.3" cy="467.3" rx="12.3" ry="9.6" fill="url(#hole)" stroke="#1c2a2a" stroke-width="1.8"/>
<ellipse cx="515.3" cy="474.6" rx="6" ry="1.7" fill="#fff"/>
<ellipse cx="578.5" cy="414.5" rx="35.8" ry="28.2" fill="url(#cone)" stroke="#163636" stroke-width="2"/>
<ellipse cx="578.5" cy="429.8" rx="12.3" ry="9.6" fill="url(#hole)" stroke="#1c2a2a" stroke-width="1.8"/>
<ellipse cx="578.5" cy="437.1" rx="6" ry="1.7" fill="#fff"/>
<ellipse cx="641.8" cy="377.0" rx="35.8" ry="28.2" fill="url(#cone)" stroke="#163636" stroke-width="2"/>
<ellipse cx="641.8" cy="392.3" rx="12.3" ry="9.6" fill="url(#hole)" stroke="#1c2a2a" stroke-width="1.8"/>
<ellipse cx="641.8" cy="399.6" rx="6" ry="1.7" fill="#fff"/>
<ellipse cx="483.4" cy="627.7" rx="35.8" ry="28.2" fill="url(#cone)" stroke="#163636" stroke-width="2"/>
<ellipse cx="483.4" cy="643.0" rx="12.3" ry="9.6" fill="url(#hole)" stroke="#1c2a2a" stroke-width="1.8"/>
<ellipse cx="483.4" cy="650.3" rx="6" ry="1.7" fill="#fff"/>
<ellipse cx="546.6" cy="590.2" rx="35.8" ry="28.2" fill="url(#cone)" stroke="#163636" stroke-width="2"/>
<ellipse cx="546.6" cy="605.5" rx="12.3" ry="9.6" fill="url(#hole)" stroke="#1c2a2a" stroke-width="1.8"/>
<ellipse cx="546.6" cy="612.8" rx="6" ry="1.7" fill="#fff"/>
<ellipse cx="609.9" cy="552.7" rx="35.8" ry="28.2" fill="url(#cone)" stroke="#163636" stroke-width="2"/>
<ellipse cx="609.9" cy="568.0" rx="12.3" ry="9.6" fill="url(#hole)" stroke="#1c2a2a" stroke-width="1.8"/>
<ellipse cx="609.9" cy="575.3" rx="6" ry="1.7" fill="#fff"/>
<ellipse cx="736.4" cy="477.7" rx="35.8" ry="28.2" fill="url(#cone)" stroke="#163636" stroke-width="2"/>
<ellipse cx="736.4" cy="493.0" rx="12.3" ry="9.6" fill="url(#hole)" stroke="#1c2a2a" stroke-width="1.8"/>
<ellipse cx="736.4" cy="500.3" rx="6" ry="1.7" fill="#fff"/>
<ellipse cx="799.6" cy="440.2" rx="35.8" ry="28.2" fill="url(#cone)" stroke="#163636" stroke-width="2"/>
<ellipse cx="799.6" cy="455.5" rx="12.3" ry="9.6" fill="url(#hole)" stroke="#1c2a2a" stroke-width="1.8"/>
<ellipse cx="799.6" cy="462.8" rx="6" ry="1.7" fill="#fff"/>
<polygon points="713.6,297.0 856.3,447.6 475.7,670.9 333.3,521.1" fill="none" stroke="#3a2e2e" stroke-width="1.9" stroke-linejoin="round"/>
<path d="M333.3 521.1 V536.1 L475.7 685.9 L856.3 462.6 V447.6 M475.7 670.9 V685.9" fill="none" stroke="#3a2e2e" stroke-width="1.9" stroke-linejoin="round"/>
<path d="M473.2 519.3 V562.8 A11.5 5 0 0 0 496.2 562.8 V519.3 Z" fill="url(#shaft)" stroke="#353535" stroke-width="1"/>
<path d="M474.7 564.8 A11 4 0 0 0 494.7 564.8" fill="none" stroke="#2a2a70" stroke-width="1.2"/>
<ellipse cx="484.7" cy="511.8" rx="22.7" ry="16.8" fill="#3c3c3c" stroke="#2a2a2a" stroke-width="1.4"/>
<ellipse cx="484.7" cy="509.3" rx="22.5" ry="16.6" fill="#a8a8a8" stroke="#2c2c2c" stroke-width="1.9"/>
<path transform="translate(484.7 509.3)" d="M-9 -8 Q1 -1.5 11 -6.5 Q2.5 0 9 8.5 Q-1 1.5 -10.5 5.5 Q-1.5 0 -9 -8 Z" fill="#666" stroke="#262626" stroke-width="1.7" stroke-linejoin="round"/>
<path transform="translate(484.7 509.3)" d="M-2.5 -3 L-1.5 4 M2.5 -3.5 L3 4" stroke="#333" stroke-width="1"/>
<path d="M536.7 481.9 V525.4 A11.5 5 0 0 0 559.7 525.4 V481.9 Z" fill="url(#shaft)" stroke="#353535" stroke-width="1"/>
<path d="M538.2 527.4 A11 4 0 0 0 558.2 527.4" fill="none" stroke="#2a2a70" stroke-width="1.2"/>
<ellipse cx="548.2" cy="474.4" rx="22.7" ry="16.8" fill="#3c3c3c" stroke="#2a2a2a" stroke-width="1.4"/>
<ellipse cx="548.2" cy="471.9" rx="22.5" ry="16.6" fill="#a8a8a8" stroke="#2c2c2c" stroke-width="1.9"/>
<path transform="translate(548.2 471.9)" d="M-9 -8 Q1 -1.5 11 -6.5 Q2.5 0 9 8.5 Q-1 1.5 -10.5 5.5 Q-1.5 0 -9 -8 Z" fill="#666" stroke="#262626" stroke-width="1.7" stroke-linejoin="round"/>
<path transform="translate(548.2 471.9)" d="M-2.5 -3 L-1.5 4 M2.5 -3.5 L3 4" stroke="#333" stroke-width="1"/>
<path d="M600.2 444.5 V488.0 A11.5 5 0 0 0 623.2 488.0 V444.5 Z" fill="url(#shaft)" stroke="#353535" stroke-width="1"/>
<path d="M601.7 490.0 A11 4 0 0 0 621.7 490.0" fill="none" stroke="#2a2a70" stroke-width="1.2"/>
<ellipse cx="611.7" cy="437.0" rx="22.7" ry="16.8" fill="#3c3c3c" stroke="#2a2a2a" stroke-width="1.4"/>
<ellipse cx="611.7" cy="434.5" rx="22.5" ry="16.6" fill="#a8a8a8" stroke="#2c2c2c" stroke-width="1.9"/>
<path transform="translate(611.7 434.5)" d="M-9 -8 Q1 -1.5 11 -6.5 Q2.5 0 9 8.5 Q-1 1.5 -10.5 5.5 Q-1.5 0 -9 -8 Z" fill="#666" stroke="#262626" stroke-width="1.7" stroke-linejoin="round"/>
<path transform="translate(611.7 434.5)" d="M-2.5 -3 L-1.5 4 M2.5 -3.5 L3 4" stroke="#333" stroke-width="1"/>
<path d="M726.1 370.3 V413.8 A11.5 5 0 0 0 749.1 413.8 V370.3 Z" fill="url(#shaft)" stroke="#353535" stroke-width="1"/>
<path d="M727.6 415.8 A11 4 0 0 0 747.6 415.8" fill="none" stroke="#2a2a70" stroke-width="1.2"/>
<ellipse cx="737.6" cy="362.8" rx="22.7" ry="16.8" fill="#3c3c3c" stroke="#2a2a2a" stroke-width="1.4"/>
<ellipse cx="737.6" cy="360.3" rx="22.5" ry="16.6" fill="#a8a8a8" stroke="#2c2c2c" stroke-width="1.9"/>
<path transform="translate(737.6 360.3)" d="M-9 -8 Q1 -1.5 11 -6.5 Q2.5 0 9 8.5 Q-1 1.5 -10.5 5.5 Q-1.5 0 -9 -8 Z" fill="#666" stroke="#262626" stroke-width="1.7" stroke-linejoin="round"/>
<path transform="translate(737.6 360.3)" d="M-2.5 -3 L-1.5 4 M2.5 -3.5 L3 4" stroke="#333" stroke-width="1"/>
<path d="M626.5,487.1 659.7,467.9 M659.7,467.9 684.8,495.2 M684.8,495.2 651.6,513.7 M651.6,513.7 626.5,487.1" stroke="#e8e8e8" stroke-width="1" stroke-dasharray="2 1.5" fill="none"/>
<path d="M626.5 487 V462 L659.7 442 V446 M626.5 462 L651.6 488 V492" stroke="#1aa0a0" stroke-width="1" fill="none"/>
<path d="M659.7 446 V467.9 M651.6 492 V513.7" stroke="#c8c8c8" stroke-width="1" fill="none"/>
<path d="M659.7 467.9 L686 452 M626.5 487 L675 535 M626.5 487 V430 M619 427.5 H632 M619 436 H632" stroke="#d0d0d0" stroke-width="1.1" fill="none"/>
<path d="M693 448 L680.5 452.5 L682.5 456 Z" fill="#e8e8e8" stroke="#999" stroke-width="0.5"/>
<path d="M675.5 537 L665.5 528.5 L668.5 525.5 Z" fill="#e8e8e8" stroke="#999" stroke-width="0.5"/>
<text x="676" y="549" font-size="8" fill="#d8d8d8" font-family="Liberation Sans">X</text>
<text x="694" y="450" font-size="9" fill="#e0e0e0" font-family="Liberation Sans">Y</text>
<g stroke="#c8c8c8" stroke-width="1" fill="none"><path d="M363.6 750 L398.2 732.7 L422.7 756.4 L388.2 775.5 Z M363.6 750 V775.5 L388.2 801.8 V775.5 M388.2 801.8 L422.7 782.7 V756.4"/></g>
<path d="M390.5 753 V734 H387.8 L392.7 722 L397.6 734 H394.9 V753 Z" fill="#2a2f80" stroke="#202460" stroke-width="0.6"/>
<text x="388.5" y="719" font-size="11" fill="#3a78c8" font-family="Liberation Sans">Z</text>
<path d="M418 753.5 L441.5 740.5 L443 743.5 L452 732.5 L437.5 735.5 L440 738 L417 750.5 Z" fill="#36c036" stroke="#1f7a2a" stroke-width="0.6"/>
<path d="M418.5 753.5 L441.5 740.5 L443 743.5 L452 732.5" stroke="#1a4a3a" stroke-width="1" fill="none"/>
<path d="M403 781.5 L422 800 L419.5 802.5 L436 811 L428 795 L425.5 797.5 L406 778.5 Z" fill="#c07a30" stroke="#8a5020" stroke-width="0.5"/>
<text x="437.5" y="822" font-size="11" fill="#d08a3a" font-family="Liberation Sans">X</text>
<path d="M456 722 L459.5 725.5 L463.5 721 M459.5 725.5 V730" stroke="#50c050" stroke-width="0.9" fill="none"/>
</svg>
<!--/VIEW-->
</div>
<div class="a" id="bottom"></div>
<div class="a" id="vbot"></div>
</body></html>
